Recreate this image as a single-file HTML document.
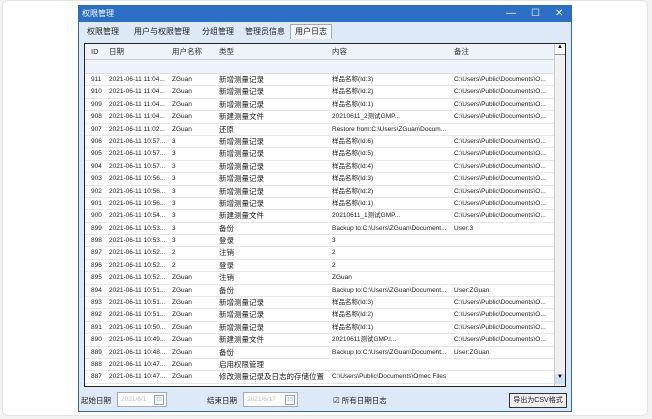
<!DOCTYPE html>
<html><head><meta charset="utf-8"><style>
*{margin:0;padding:0;box-sizing:border-box}
body{width:652px;height:419px;background:#f3f3f3;font-family:"Liberation Sans","Noto Sans CJK SC",sans-serif;position:relative;overflow:hidden}
.card{position:absolute;left:2px;top:0;width:646px;height:416px;background:#fff;border-radius:6px;border:1px solid #e4e4e4}
.win{position:absolute;left:78px;top:5px;width:494px;height:407px;background:#dde9f7;border:1px solid #2a6bc0}
.title{height:16px;background:#2b6fc6;color:#fff;font-size:8px;line-height:16px;padding-left:3px;position:relative}
.ctl{position:absolute;top:0;color:#fff;font-size:10px}
.tabs{height:17px;position:relative;font-size:8px;color:#222}
.tab{position:absolute;top:4px;height:13px;line-height:12px}
.tab.act{background:#f4f8fd;border:1px solid #9ab;border-bottom:none;padding:0 4px;top:2px;height:15px;line-height:14px}
.grid{position:absolute;left:5px;top:37px;width:482px;height:344px;background:#fff;border:1px solid #222;overflow:hidden}
.hdr{height:16px;background:#eef3fa;border-bottom:1px solid #ccd;font-size:7.5px;line-height:16px;position:relative;color:#333}
.empty{height:14px;background:#eef3fa;border-bottom:1px solid #dde}
.row{height:12.4px;font-size:6.5px;line-height:12.4px;position:relative;border-bottom:1px solid #e6e6e6;color:#222;white-space:nowrap}
.c{position:absolute;top:0}
.t{font-size:7.5px}
.sb{position:absolute;right:0;top:0;width:11px;height:342px;background:#f0f0f0;border-left:1px solid #ccc}
.bot{position:absolute;left:0;top:386px;width:492px;font-size:7.5px;color:#222}
.inp{position:absolute;top:0;height:15px;border:1px solid #aab;background:#fff;color:#bbb;font-size:6.5px;line-height:13px;padding-left:3px}
.cal{position:absolute;right:2px;top:2px;width:10px;height:10px;border:1px solid #8ab;font-size:5px;line-height:8px;text-align:center;color:#8ab}
</style></head><body>
<div class="card"></div>
<div class="win">
<div class="title">权限管理<span class="ctl" style="left:427px">—</span><span class="ctl" style="left:452px">☐</span><span class="ctl" style="left:476px">✕</span></div>
<div class="tabs">
<span class="tab" style="left:8px">权限管理</span>
<span class="tab" style="left:55px">用户与权限管理</span>
<span class="tab" style="left:123px">分组管理</span>
<span class="tab" style="left:166px">管理员信息</span>
<span class="tab act" style="left:211px">用户日志</span>
</div>
<div class="grid">
<div class="hdr"><span class="c" style="left:6px">ID</span><span class="c" style="left:24px">日期</span><span class="c" style="left:87px">用户名称</span><span class="c" style="left:134px">类型</span><span class="c" style="left:247px">内容</span><span class="c" style="left:369px">备注</span></div>
<div class="empty"></div>
<div id="rows"></div>
<div class="sb"><div style="height:11px;border-bottom:1px solid #999;background:#fff;font-size:6px;text-align:center">▲</div><div style="position:absolute;bottom:2px;width:10px;height:10px;background:#cfe0f5;font-size:6px;text-align:center">▼</div></div>
</div>
<div class="bot">
<span style="position:absolute;left:2px;top:3px">起始日期</span>
<div class="inp" style="left:38px;width:50px">2021/6/1<div class="cal">15</div></div>
<span style="position:absolute;left:128px;top:3px">结束日期</span>
<div class="inp" style="left:164px;width:55px">2021/6/17<div class="cal">15</div></div>
<span style="position:absolute;left:254px;top:3px">☑ 所有日期日志</span>
<div style="position:absolute;left:430px;top:1px;width:58px;height:15px;border:1px solid #333;background:#eee;font-size:7px;line-height:13px;text-align:center">导出为CSV格式</div>
</div>
</div>
<script>
var d=[["911","11:04","ZGuan","新增测量记录","样品名称(Id:3)","C:\\Users\\Public\\Documents\\O..."],
["910","11:04","ZGuan","新增测量记录","样品名称(Id:2)","C:\\Users\\Public\\Documents\\O..."],
["909","11:04","ZGuan","新增测量记录","样品名称(Id:1)","C:\\Users\\Public\\Documents\\O..."],
["908","11:04","ZGuan","新建测量文件","20210611_2测试GMP...","C:\\Users\\Public\\Documents\\O..."],
["907","11:02","ZGuan","还原","Restore from:C:\\Users\\ZGuan\\Docum...",""],
["906","10:57","3","新增测量记录","样品名称(Id:6)","C:\\Users\\Public\\Documents\\O..."],
["905","10:57","3","新增测量记录","样品名称(Id:5)","C:\\Users\\Public\\Documents\\O..."],
["904","10:57","3","新增测量记录","样品名称(Id:4)","C:\\Users\\Public\\Documents\\O..."],
["903","10:56","3","新增测量记录","样品名称(Id:3)","C:\\Users\\Public\\Documents\\O..."],
["902","10:56","3","新增测量记录","样品名称(Id:2)","C:\\Users\\Public\\Documents\\O..."],
["901","10:56","3","新增测量记录","样品名称(Id:1)","C:\\Users\\Public\\Documents\\O..."],
["900","10:54","3","新建测量文件","20210611_1测试GMP...","C:\\Users\\Public\\Documents\\O..."],
["899","10:53","3","备份","Backup to:C:\\Users\\ZGuan\\Document...","User:3"],
["898","10:53","3","登录","3",""],
["897","10:52","2","注销","2",""],
["896","10:52","2","登录","2",""],
["895","10:52","ZGuan","注销","ZGuan",""],
["894","10:51","ZGuan","备份","Backup to:C:\\Users\\ZGuan\\Document...","User:ZGuan"],
["893","10:51","ZGuan","新增测量记录","样品名称(Id:3)","C:\\Users\\Public\\Documents\\O..."],
["892","10:51","ZGuan","新增测量记录","样品名称(Id:2)","C:\\Users\\Public\\Documents\\O..."],
["891","10:50","ZGuan","新增测量记录","样品名称(Id:1)","C:\\Users\\Public\\Documents\\O..."],
["890","10:49","ZGuan","新建测量文件","20210611测试GMP.l...","C:\\Users\\Public\\Documents\\O..."],
["889","10:48","ZGuan","备份","Backup to:C:\\Users\\ZGuan\\Document...","User:ZGuan"],
["888","10:47","ZGuan","启用权限管理","",""],
["887","10:47","ZGuan","修改测量记录及日志的存储位置","C:\\Users\\Public\\Documents\\Omec Files",""]];
var h="";d.forEach(function(r){h+='<div class="row"><span class="c" style="left:6px">'+r[0]+'</span><span class="c" style="left:24px">2021-06-11 '+r[1]+'...</span><span class="c" style="left:87px">'+r[2]+'</span><span class="c t" style="left:134px">'+r[3]+'</span><span class="c" style="left:247px">'+r[4]+'</span><span class="c" style="left:369px">'+r[5]+'</span></div>'});
document.getElementById("rows").innerHTML=h;
</script>
</body></html>
